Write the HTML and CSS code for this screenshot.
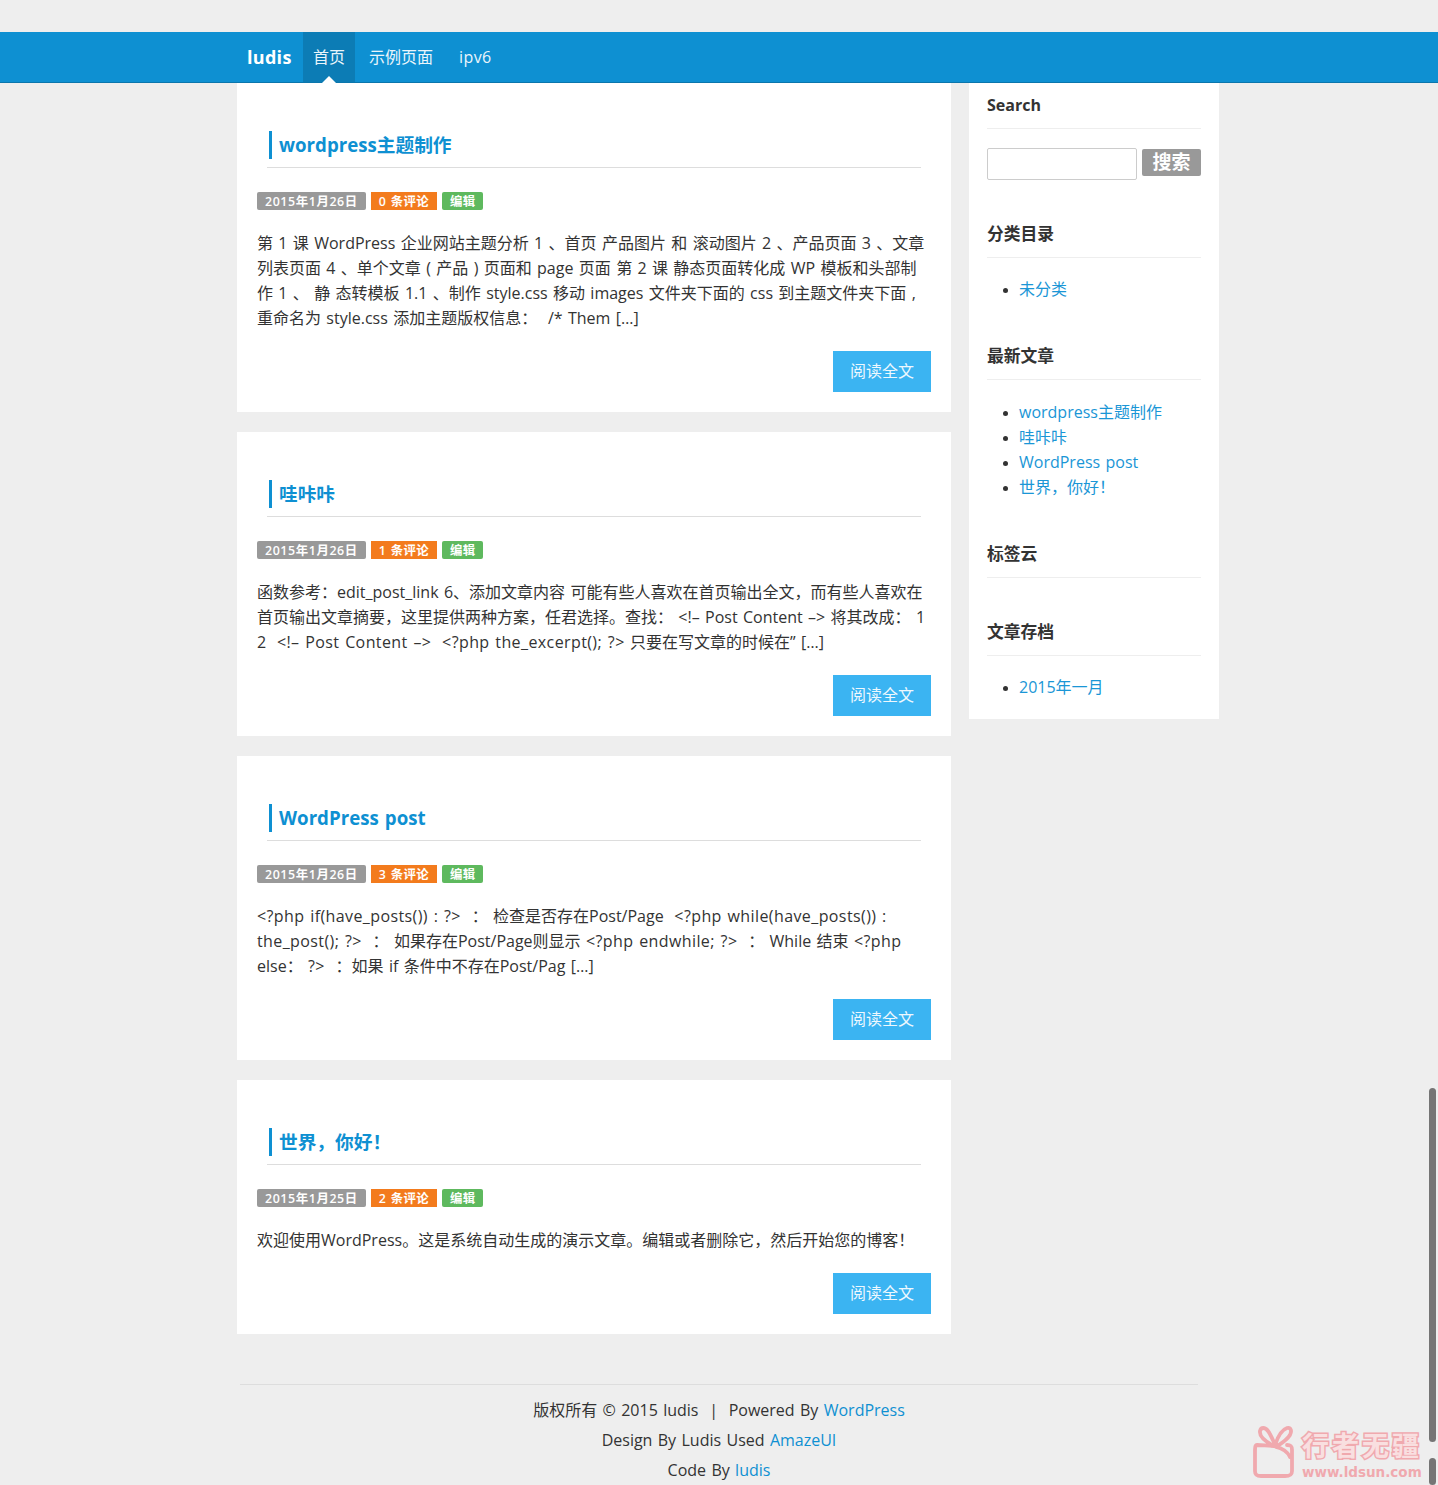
FILE: index.html
```html
<!DOCTYPE html>
<html lang="zh-CN">
<head>
<meta charset="utf-8">
<title>ludis</title>
<link rel="stylesheet" href="styles.css">
</head>
<body>
<header class="topbar">
  <nav class="topbar-inner">
    <a class="brand" href="#">ludis</a>
    <a class="nav-item active" href="#">首页</a>
    <a class="nav-item" href="#">示例页面</a>
    <a class="nav-item" href="#">ipv6</a>
  </nav>
</header>
<div class="page">
  <main class="posts">
    <article class="post">
      <h2 class="post-title"><a href="#">wordpress主题制作</a></h2>
      <div class="meta"><span class="badge gray">2015年1月26日</span><span class="badge orange">0 条评论</span><span class="badge green">编辑</span></div>
      <p class="excerpt">第 1 课 WordPress 企业网站主题分析 1 、首页 产品图片 和 滚动图片 2 、产品页面 3 、文章 列表页面 4 、单个文章 ( 产品 ) 页面和 page 页面 第 2 课 静态页面转化成 WP 模板和头部制<br>作 1 、 静 态转模板 1.1 、制作 style.css 移动 images 文件夹下面的 css 到主题文件夹下面 ,<br>重命名为 style.css 添加主题版权信息： &nbsp;/* Them […]</p>
      <div class="more"><a class="more-btn" href="#">阅读全文</a></div>
    </article>
    <article class="post">
      <h2 class="post-title"><a href="#">哇咔咔</a></h2>
      <div class="meta"><span class="badge gray">2015年1月26日</span><span class="badge orange">1 条评论</span><span class="badge green">编辑</span></div>
      <p class="excerpt">函数参考：edit_post_link 6、添加文章内容 可能有些人喜欢在首页输出全文，而有些人喜欢在首页输出文章摘要，这里提供两种方案，任君选择。查找： &lt;!– Post Content –&gt; 将其改成： 1<br>2 &nbsp;<span class="code">&lt;!– Post Content –&gt;</span> &nbsp;<span class="code">&lt;?php the_excerpt(); ?&gt;</span> 只要在写文章的时候在” […]</p>
      <div class="more"><a class="more-btn" href="#">阅读全文</a></div>
    </article>
    <article class="post">
      <h2 class="post-title"><a href="#">WordPress post</a></h2>
      <div class="meta"><span class="badge gray">2015年1月26日</span><span class="badge orange">3 条评论</span><span class="badge green">编辑</span></div>
      <p class="excerpt"><span class="code">&lt;?php if(have_posts()) : ?&gt;</span> &nbsp;： 检查是否存在Post/Page &nbsp;<span class="code">&lt;?php while(have_posts()) :</span> <span class="code">the_post(); ?&gt;</span> &nbsp;： 如果存在Post/Page则显示 <span class="code">&lt;?php endwhile; ?&gt;</span> &nbsp;： While 结束 <span class="code">&lt;?php</span><br>else： <span class="code">?&gt;</span> &nbsp;：如果 if 条件中不存在Post/Pag […]</p>
      <div class="more"><a class="more-btn" href="#">阅读全文</a></div>
    </article>
    <article class="post">
      <h2 class="post-title"><a href="#">世界，你好！</a></h2>
      <div class="meta"><span class="badge gray">2015年1月25日</span><span class="badge orange">2 条评论</span><span class="badge green">编辑</span></div>
      <p class="excerpt">欢迎使用WordPress。这是系统自动生成的演示文章。编辑或者删除它，然后开始您的博客！</p>
      <div class="more"><a class="more-btn" href="#">阅读全文</a></div>
    </article>
  </main>
  <aside class="sidebar">
    <section class="widget">
      <h3 class="widget-title widget-title-latin">Search</h3>
      <form class="search"><input class="search-input" type="text"><button class="search-btn" type="button">搜索</button></form>
    </section>
    <section class="widget">
      <h3 class="widget-title">分类目录</h3>
      <ul class="links"><li><a href="#">未分类</a></li></ul>
    </section>
    <section class="widget">
      <h3 class="widget-title">最新文章</h3>
      <ul class="links links-recent">
        <li><a href="#">wordpress主题制作</a></li>
        <li><a href="#">哇咔咔</a></li>
        <li><a href="#">WordPress post</a></li>
        <li><a href="#">世界，你好！</a></li>
      </ul>
    </section>
    <section class="widget">
      <h3 class="widget-title">标签云</h3>
    </section>
    <section class="widget">
      <h3 class="widget-title">文章存档</h3>
      <ul class="links"><li><a href="#">2015年一月</a></li></ul>
    </section>
  </aside>
</div>
<footer class="footer">
  <p>版权所有 © 2015 ludis &nbsp;|&nbsp; Powered By <a href="#">WordPress</a></p>
  <p>Design By Ludis Used <a href="#">AmazeUI</a></p>
  <p>Code By <a href="#">ludis</a></p>
</footer>
<div class="scroll-thumb upper"></div>
<div class="scroll-thumb lower"></div>
<div class="watermark">
  <svg class="wm-icon" viewBox="0 0 48 56" width="48" height="56">
    <path d="M22 22C14 18 7 13 8 7C9 3 13 3 16 7C19 11 21 16 23 21C25 15 29 6 35 4C39 3 40 7 38 11C35 16 30 19 24 23C30 24 36 28 38 33M22 22C16 22 10 21 5 21C3 21 3 24 3 28V47C3 51 5 52 9 52H33C38 52 40 51 40 47V26C40 22 39 21 35 21" fill="none" stroke="#f0a9ae" stroke-width="3.8" stroke-linecap="round" stroke-linejoin="round"/>
  </svg>
  <div class="wm-text"><span class="wm-cn">行者无疆</span><span class="wm-url">www.ldsun.com</span></div>
</div>
</body>
</html>
```
FILE: styles.css
```css
* { box-sizing: border-box; }
html, body { margin: 0; padding: 0; }
body {
  position: relative;
  height: 1485px;
  overflow: hidden;
  padding-top: 32px;
  background: #eee;
  color: #333;
  font-family: "Open Sans", "Noto Sans CJK SC", sans-serif;
  font-size: 16px;
  line-height: 25px;
  word-spacing: 1.2px;
}
a { color: #0e90d2; text-decoration: none; }

.topbar {
  height: 51px;
  background: #0e90d2;
  border-bottom: 1px solid #0b76ac;
}
.topbar-inner {
  display: flex;
  gap: 4px;
  width: 982px;
  height: 50px;
  margin-left: 237px;
}
.brand {
  width: 62px;
  padding-left: 10px;
  color: #fff;
  font-size: 18px;
  font-weight: 700;
  line-height: 50px;
  letter-spacing: 0.3px;
}
.nav-item {
  position: relative;
  padding: 0 10px;
  color: #eaf5fb;
  line-height: 50px;
}
.nav-item:last-child { letter-spacing: 0.4px; padding-left: 12px; }
.nav-item.active { background: #0c7cb5; height: 50px; }
.nav-item.active::after {
  content: "";
  position: absolute;
  left: 50%;
  bottom: -1px;
  margin-left: -7px;
  border-left: 7px solid transparent;
  border-right: 7px solid transparent;
  border-bottom: 7px solid #fff;
}

.page {
  display: flex;
  align-items: flex-start;
  gap: 18px;
  width: 982px;
  margin-left: 237px;
}
.posts { display: flex; flex-direction: column; gap: 20px; width: 714px; }
.post { background: #fff; padding: 48px 20px 20px; }
.post-title {
  margin: 0 10px;
  padding-left: 2px;
  height: 37px;
  border-bottom: 1px solid #ddd;
  font-size: 18.7px;
  font-weight: 700;
  line-height: 28px;
}
.post-title a {
  display: block;
  height: 28px;
  padding-left: 7px;
  border-left: 3px solid #0e90d2;
}
.meta { display: flex; gap: 5px; margin-top: 24px; }
.badge {
  height: 18px;
  padding: 1px 8px 0;
  border-radius: 2px;
  color: #fff;
  font-size: 12.4px;
  font-weight: 600;
  line-height: 17px;
  letter-spacing: 0.3px;
}
.gray { background: #999; letter-spacing: 0.6px; }
.orange { background: #f37b1d; border-radius: 0; }
.green { background: #5eb95e; }
.excerpt { margin: 21px 0 20px; }
.code { letter-spacing: 0.4px; }
.more { display: flex; justify-content: flex-end; }
.more-btn {
  width: 98px;
  height: 41px;
  background: #3bb4f2;
  color: #eef8fe;
  line-height: 41px;
  text-align: center;
}

.sidebar { width: 250px; padding: 9px 18px 19px; background: #fff; }
.widget + .widget { margin-top: 41px; }
.widget-title {
  margin: 0;
  height: 37px;
  border-bottom: 1px solid #eee;
  font-size: 16.8px;
  font-weight: 700;
  line-height: 26px;
}
.widget-title-latin { font-size: 16px; }
.search { display: flex; align-items: flex-start; gap: 5px; margin-top: 19px; }
.search-input {
  width: 150px;
  height: 32px;
  padding: 0 8px;
  background: #fff;
  border: 1px solid #ccc;
  border-radius: 2px;
}
.search-btn {
  width: 59px;
  height: 27px;
  margin-top: 1px;
  padding: 0;
  background: #999;
  border: 0;
  border-radius: 2px;
  color: #fff;
  font-family: inherit;
  font-size: 19px;
  font-weight: 700;
  line-height: 27px;
}
.links { margin: 19px 0 0; padding: 0 0 0 32px; color: #333; }
.links-recent { margin-top: 20px; }
.links a { color: #1a96d6; }
.links li::marker { font-size: 13px; }

.footer {
  width: 958px;
  margin: 50px auto 0;
  padding-top: 10px;
  border-top: 1px solid #ddd;
  text-align: center;
}
.footer p { margin: 0; line-height: 30px; }

.scroll-thumb {
  position: absolute;
  left: 1429px;
  width: 7px;
  background: #757575;
  border-radius: 4px;
}
.scroll-thumb.upper { top: 1088px; height: 354px; }
.scroll-thumb.lower { top: 1458px; height: 27px; }

.watermark {
  position: absolute;
  left: 1252px;
  top: 1424px;
  display: flex;
  gap: 2px;
  color: #f0a9ae;
}
.wm-icon { display: block; }
.wm-text { display: flex; flex-direction: column; padding-top: 4px; width: 124px; }
.wm-cn {
  font-size: 27px;
  font-weight: 700;
  line-height: 35px;
  letter-spacing: 3px;
  white-space: nowrap;
  color: #f9dfe0;
  -webkit-text-stroke: 3px #f0a9ae;
  paint-order: stroke fill;
}
.wm-url {
  margin-top: 2px;
  font-family: "DejaVu Sans", sans-serif;
  font-size: 13.5px;
  font-weight: 700;
  line-height: 14px;
  word-spacing: 0;
  white-space: nowrap;
}
```
